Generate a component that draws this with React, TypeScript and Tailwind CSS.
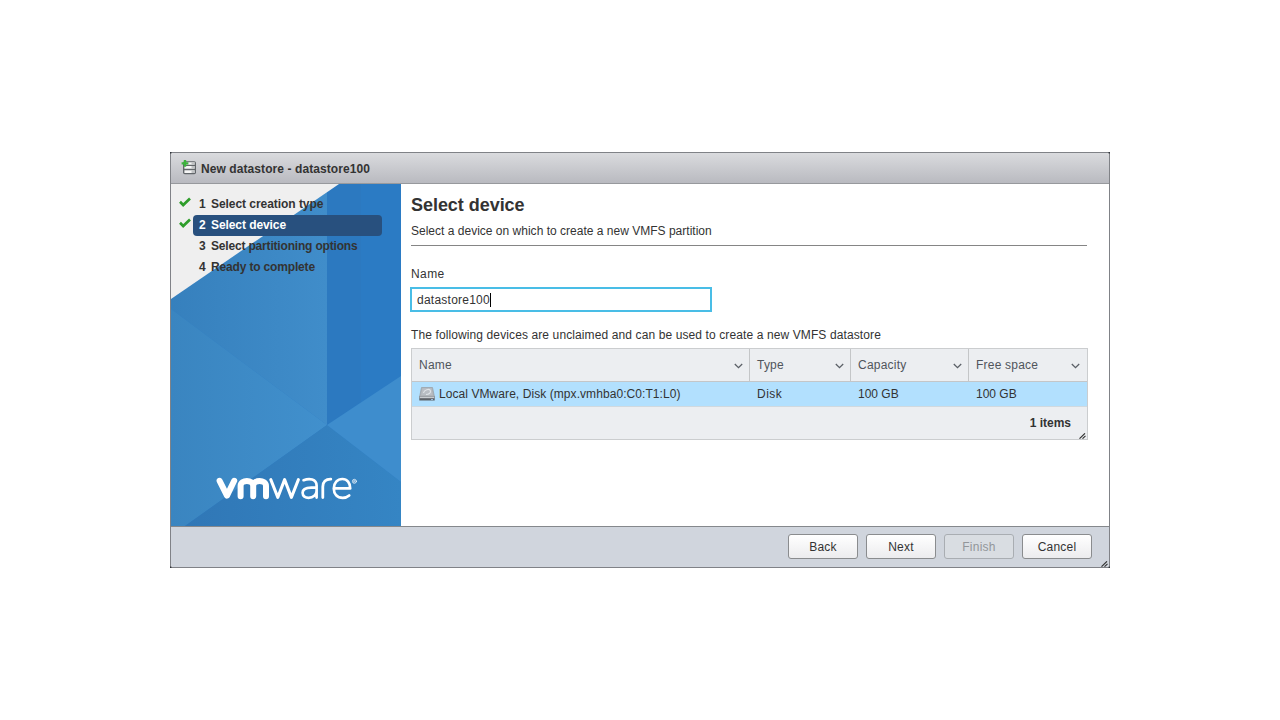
import type { ReactNode } from "react";

const steps = [
  { title: "Select creation type", spacing: "tracking-[-0.05px]" },
  { title: "Select device", spacing: "tracking-[-0.08px]" },
  { title: "Select partitioning options", spacing: "tracking-[-0.18px]" },
  { title: "Ready to complete", spacing: "tracking-[-0.16px]" },
];

function Check() {
  return (
    <svg width="12" height="10" viewBox="0 0 12 10" fill="none">
      <path d="M1 4.8 4.2 8 11 1.5" stroke="#2f9e2b" strokeWidth="2.7" />
    </svg>
  );
}

function DatastoreIcon() {
  return (
    <svg width="16" height="16" viewBox="0 0 16 16">
      <rect x="2" y="1.2" width="13" height="13" rx="1.8" fill="#62666a" />
      <path d="M3.4 2.2h10.2v2.6H3.4zM3.4 6h10.2v2.8H3.4zM3.4 10.2h10.2v2.8H3.4z" fill="#f6f6f6" />
      <path d="M10.5 2.2h3.1v2.6h-3.1zM10.5 6h3.1v2.8h-3.1zM10.5 10.2h3.1v2.8h-3.1z" fill="#c0c2c4" />
      <path d="M2.8 0h2.4v2.2h2.2v2.4H5.2v2.2H2.8V4.6H.6V2.2h2.2z" fill="#3db33d" />
    </svg>
  );
}

function DiskIcon() {
  return (
    <svg width="16" height="14" viewBox="0 0 16 14">
      <path d="M2.5.5h11l2 9.5H.5z" fill="#b0b5ba" stroke="#989ea4" strokeWidth=".7" />
      <path d="M3.5 1.3h9L13.6 8H2.4z" fill="#b9bec4" />
      <path d="M4.5 6c.5-3 6-5 7-2 .5 2-2 3.5-4.5 3.5" stroke="#dfe4e8" strokeWidth="1.2" fill="none" />
      <path d="M.3 9.5h15.4v4H.3z" fill="#5c6268" />
      <path d="M.7 9.6h14.6v1.6H.7z" fill="#c9cdd1" />
      <path d="M12 12h2v1h-2z" fill="#9bd" />
    </svg>
  );
}

function Chevron() {
  return (
    <svg width="9" height="6" viewBox="0 0 9 6" fill="none">
      <path d="M.8 1 4.5 4.6 8.2 1" stroke="#5a5f66" strokeWidth="1.3" />
    </svg>
  );
}

function Grip() {
  return (
    <svg className="absolute right-[1px] bottom-0" width="7" height="6" viewBox="0 0 7 6">
      <path d="M.5 5.7 6 .3M3.5 5.7 6.5 2.8" stroke="#333" strokeWidth="1.1" />
    </svg>
  );
}

function Backdrop() {
  return (
    <svg className="absolute inset-0" width="230" height="342" viewBox="0 0 230 342">
      <defs>
        <linearGradient id="upper" x1="0" y1="0" x2="1" y2="0">
          <stop offset="0" stopColor="#3680bd" />
          <stop offset="1" stopColor="#408dca" />
        </linearGradient>
        <linearGradient id="left" x1="0" y1="0" x2="1" y2="0">
          <stop offset="0" stopColor="#3a85c0" />
          <stop offset="1" stopColor="#4190cd" />
        </linearGradient>
        <linearGradient id="bottom" x1="0" y1="0" x2="1" y2="0">
          <stop offset="0" stopColor="#3077b6" />
          <stop offset="1" stopColor="#3585c4" />
        </linearGradient>
      </defs>
      <rect width="230" height="342" fill="#2b7bc4" />
      <path d="M156 0h34v218l-34 23z" fill="#2c79c0" />
      <path d="M0 115 156 8v233L0 125z" fill="url(#upper)" />
      <path d="M0 125 156 241 14 342H0z" fill="url(#left)" />
      <path d="M156 241 14 342h216v-44z" fill="url(#bottom)" />
      <path d="M156 241l74-49v106z" fill="#3e8dcd" />
      <path d="M0 0h168L0 115z" fill="#efefef" />
    </svg>
  );
}

function Logo() {
  return (
    <svg className="absolute top-[293px] left-[45px]" width="142" height="24" viewBox="0 0 142 24" fill="none" stroke="#fff" strokeLinecap="round" strokeLinejoin="round">
      <path d="M3.6 3.8 11 18.6 18.2 3.8" strokeWidth="6" />
      <path d="M24.6 19.2V9c0-6.6 12.6-6.6 12.6 0v10.2M37.2 9c0-6.6 12.8-6.6 12.8 0v10.2" strokeWidth="6" />
      <path d="M54.8 2.6 61.8 20.4 68.6 2.6 75.4 20.4 82.4 2.6" strokeWidth="3" />
      <path d="M87.6 3.2c5.5-2.2 13-1.6 13 5.4v12M100.6 10.6h-5.4c-5 0-8.6 1.7-8.6 5.2 0 3.4 2.8 5 6 5 4.6 0 8-3 8-6.8" strokeWidth="2.7" />
      <path d="M106.8 20.6V9.8c0-5 2.9-7.8 8-7.7" strokeWidth="2.8" />
      <path d="M118 11.4h16.2c0-5.6-3-9.4-7.8-9.4-5 0-8.6 4-8.6 9.5s3.4 9.3 8.9 9.3c2.6 0 4.7-.8 6.5-2.4" strokeWidth="2.7" />
      <circle cx="138.4" cy="4.3" r="2" strokeWidth=".7" />
      <path d="M137.8 5.4V3.3h.8c.9 0 .9 1 0 1h-.7l1.1 1.1" strokeWidth=".5" />
    </svg>
  );
}

function HeadCell({ children, last = false }: { children: ReactNode; last?: boolean }) {
  return (
    <div className={last ? "flex items-center justify-between pr-[7px] pl-[7px]" : "flex items-center justify-between border-r border-[#c4c6c8] pr-[6px] pl-[7px]"}>
      <span className="tracking-[0.22px]">{children}</span>
      <span className="pt-[2px]"><Chevron /></span>
    </div>
  );
}

function Button({ children, disabled = false }: { children: ReactNode; disabled?: boolean }) {
  return (
    <button
      disabled={disabled}
      className={
        disabled
          ? "h-[25px] w-[70px] rounded-[3px] border border-[#a9adb2] bg-[#d9dde2] tracking-[0.25px] text-[#92969a]"
          : "h-[25px] w-[70px] rounded-[3px] border border-[#8a8c8e] bg-linear-to-b from-white to-[#ececee] tracking-[0.2px] text-[#333]"
      }
    >
      {children}
    </button>
  );
}

export default function App() {
  return (
    <div className="flex h-[720px] w-[1280px] items-center justify-center bg-white font-['Liberation_Sans',Arial,sans-serif] text-[12px] leading-[14px] text-[#333]">
      <div className="bg-[#30343a]">
        <div className="flex h-[416px] w-[940px] flex-col overflow-hidden rounded-[3px] border border-[#808287] bg-white">
          <header className="flex h-[31px] shrink-0 items-center gap-[4px] border-b border-[#97999d] bg-linear-to-b from-[#dadbde] to-[#b9bac0] pl-[10px] font-bold">
            <DatastoreIcon />
            <span className="pt-[2px] tracking-[0.08px]">New datastore - datastore100</span>
          </header>
          <div className="flex h-[342px] shrink-0">
            <aside className="relative w-[230px]">
              <Backdrop />
              <ol className="relative flex flex-col pt-[10px] font-bold">
                {steps.map((step, i) => (
                  <li key={step.title} className="flex h-[21px] items-center pl-[8px]">
                    <span className="w-[14px] pb-[5px]">{i < 2 && <Check />}</span>
                    <span className={i === 1 ? "flex h-[21px] w-[189px] items-center rounded-[4px] bg-[#28507e] pb-[2px] pl-[6px] text-white" : "flex h-[21px] w-[189px] items-center pb-[2px] pl-[6px]"}>
                      <span className="w-[12px]">{i + 1}</span>
                      <span className={step.spacing}>{step.title}</span>
                    </span>
                  </li>
                ))}
              </ol>
              <Logo />
            </aside>
            <main className="flex w-[708px] flex-col pt-[10px] pl-[10px]">
              <h1 className="text-[18px] leading-[22px] font-bold tracking-[-0.04px]">Select device</h1>
              <p className="mt-[8px] tracking-[0.01px]">Select a device on which to create a new VMFS partition</p>
              <div className="mt-[7px] h-px w-[676px] bg-[#858585]" />
              <label className="mt-[21px] tracking-[0.4px]">Name</label>
              <div className="mt-[6px] -ml-px flex h-[25px] w-[302px] items-center border-2 border-[#49bde6] pl-[5px]">
                <span className="tracking-[0.24px]">datastore100</span>
                <span className="h-[14px] w-px bg-black" />
              </div>
              <p className="mt-[16px] tracking-[0.11px]">The following devices are unclaimed and can be used to create a new VMFS datastore</p>
              <div className="relative mt-[6px] h-[92px] w-[677px] border border-[#cbcdcf] bg-[#eceef1]">
                <div className="grid h-[33px] grid-cols-[338px_101px_118px_118px] border-b border-[#c4c6c8] text-[#50555c]">
                  <HeadCell>Name</HeadCell>
                  <HeadCell>Type</HeadCell>
                  <HeadCell>Capacity</HeadCell>
                  <HeadCell last>Free space</HeadCell>
                </div>
                <div className="grid h-[25px] grid-cols-[338px_101px_118px_118px] items-center border-b border-[#d0d9df] bg-[#b2e0fe]">
                  <span className="flex items-center gap-[4px] pl-[7px] tracking-[0.07px]"><DiskIcon />Local VMware, Disk (mpx.vmhba0:C0:T1:L0)</span>
                  <span className="pl-[7px] tracking-[0.5px]">Disk</span>
                  <span className="pl-[7px]">100 GB</span>
                  <span className="pl-[7px]">100 GB</span>
                </div>
                <div className="flex h-[32px] items-center justify-end pr-[16px] font-bold">1 items</div>
                <Grip />
              </div>
            </main>
          </div>
          <footer className="relative flex h-[41px] shrink-0 items-start justify-end gap-[8px] border-t border-[#85888c] bg-[#d0d5dd] pt-[7px] pr-[17px]">
            <Button>Back</Button>
            <Button>Next</Button>
            <Button disabled>Finish</Button>
            <Button>Cancel</Button>
            <Grip />
          </footer>
        </div>
      </div>
    </div>
  );
}
